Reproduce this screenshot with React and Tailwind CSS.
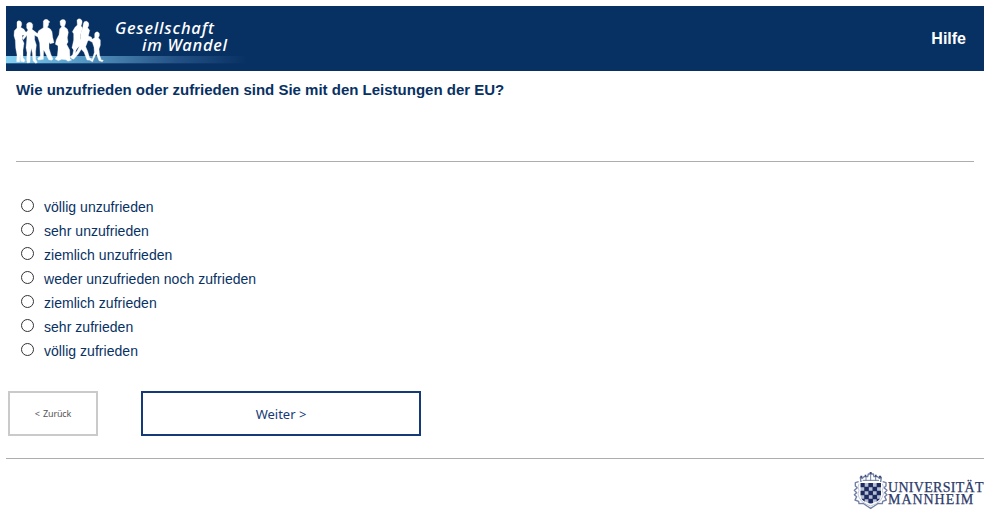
const options = [
  'völlig unzufrieden',
  'sehr unzufrieden',
  'ziemlich unzufrieden',
  'weder unzufrieden noch zufrieden',
  'ziemlich zufrieden',
  'sehr zufrieden',
  'völlig zufrieden',
];

function PeopleBanner() {
  return (
    <svg className="absolute left-0 top-0" width="250" height="65" viewBox="18 18 750 195" aria-hidden="true">
      <defs>
        <linearGradient id="strip" x1="18" x2="740" y1="0" y2="0" gradientUnits="userSpaceOnUse">
          <stop offset="0" stopColor="#84d1f3" />
          <stop offset="0.25" stopColor="#5ba4ce" />
          <stop offset="0.43" stopColor="#4883b0" />
          <stop offset="0.7" stopColor="#245286" />
          <stop offset="1" stopColor="#083163" />
        </linearGradient>
      </defs>
      <rect x="18" y="168" width="722" height="21" fill="url(#strip)" />
      <rect x="18" y="189" width="722" height="3" fill="url(#strip)" opacity="0.3" />
      <g fill="#fff" stroke="#fff" strokeWidth="1" strokeLinejoin="round">
        <path d="M51 66Q54 60 61 63Q67 67 65 75L62 82L72 88L77 96L84 98L76 106L67 105L66 116L72 130L69 150L69 173L75 181L72 186L62 184L60 164L59 185L50 185L51 165L47 143L46 121L42 107L43 92L51 84Z" />
        <path d="M80 72Q84 65 94 68Q100 72 98 81L96 88L104 94L113 101L121 96L122 101L112 110L104 106L104 119L109 135L107 154L107 178L112 187L107 190L99 182L97 159L94 145L91 162L90 187L82 189L80 180L81 158L78 143L80 122L81 106L70 119L66 114L78 98L84 90L80 84Z" />
        <path d="M130 63Q134 56 143 59L146 63L150 66L146 68Q147 77 142 82L151 87L156 95L158 112L162 128L150 131L147 127L147 145L153 164L159 177L155 181L146 179L135 157L131 150L130 178L115 180L113 175L121 169L120 152L119 129L116 119L111 104L116 92L130 83Z" />
        <path d="M180 64Q184 56 193 59Q199 63 196 72L193 80L202 87L205 97L202 113L204 126L200 133L209 150L210 176L215 180L204 184L198 179L185 178L175 182L165 177L172 168L174 149L174 137L166 133L169 119L177 104L179 87L185 80L181 75Z" />
        <path d="M231 61Q234 54 241 57Q248 60 246 69L243 78L248 84L242 103L241 124L236 137L228 151L224 172L218 176L210 171L218 164L221 149L216 143L221 120L221 101L217 95L225 82L232 75Z" />
        <path d="M250 71Q252 62 260 64Q268 67 266 77L263 83L269 91L265 108L274 111L278 122L270 117L263 124L257 140L263 154L269 174L276 176L272 181L261 180L252 157L244 148L235 162L221 178L213 174L231 153L238 139L229 146L220 149L217 141L231 133L242 116L243 98L248 84Z" />
        <path d="M284 101Q287 94 294 96Q300 100 298 107L295 113L301 120L301 136L297 147L299 166L304 180L310 181L307 185L297 182L289 161L281 177L278 185L271 182L277 177L283 157L282 142L277 127L266 121L264 117L276 118L284 113Z" />
      </g>
    </svg>
  );
}

function Crest() {
  const squares = [];
  for (let r = 0; r < 5; r++) {
    for (let c = 0; c < 5; c++) {
      if ((r + c) % 2 === 0) squares.push([58 + c * 12.4, 84 + r * 12]);
    }
  }
  return (
    <svg className="shrink-0" width="35" height="40" viewBox="36 45 105 120" aria-hidden="true">
      <defs>
        <clipPath id="shield">
          <path d="M58 84H120V122Q118 136 101 142L89 148L77 142Q60 136 58 122Z" />
        </clipPath>
      </defs>
      <g clipPath="url(#shield)">
        <rect x="57" y="82" width="64" height="68" fill="#b9c0d3" />
        {squares.map(([x, y]) => (
          <rect key={x + '-' + y} x={x - 0.7} y={y - 0.7} width="13.8" height="13.4" fill="#1d2b60" />
        ))}
      </g>
      <g fill="none" stroke="#7380a5" strokeWidth="4.2" strokeLinejoin="round">
        <path d="M60 81L58 67L64 70L69 65H80L82 57H97L99 65H110L115 70L121 67L119 81" />
        <path d="M65 76H114M89 52V78M75 66V78M104 66V78" strokeWidth="3" />
        <path d="M53 80L43 83V93L49 98L40 106L47 113L40 119L47 125L42 135L53 139L54 146L67 145L78 153L89 160L100 153L111 145L124 146L125 139L136 135L131 125L138 119L131 113L138 106L129 98L135 93V83L125 80" />
        <path d="M54 86L51 96L54 106L51 117L54 127L61 138L75 147L89 153L103 147L117 138L124 127L127 117L124 106L127 96L124 86" stroke="#c1c7d8" strokeWidth="3" />
      </g>
      <g fill="#3c4a7a">
        <path d="M58 62H64V68H58ZM71 59H76V65H71ZM86 51H92V57H86ZM102 59H107V65H102ZM114 62H120V68H114Z" />
      </g>
    </svg>
  );
}

export default function App() {
  return (
    <main className="h-[513px] w-[986px] overflow-hidden bg-white pl-1.5 pr-0.5 pt-1.5 font-['Liberation_Sans',Arial,sans-serif] text-[#083163]">
      <header className="relative flex h-[65px] items-start justify-between bg-[#083163] text-white">
        <PeopleBanner />
        <div className="relative pl-[109px] pt-[13px] font-['Noto_Sans',sans-serif] text-[16.5px] font-medium italic leading-[17px]">
          <div className="tracking-[0.8px]">Gesellschaft</div>
          <div className="pl-[27px] tracking-[0.75px]">im Wandel</div>
        </div>
        <a className="pr-[18px] pt-[21px] text-[16px] font-bold leading-6">Hilfe</a>
      </header>
      <section className="px-2.5">
        <h1 className="h-[91px] border-b border-[#adadad] pt-[9px] text-[15px] font-bold leading-5">
          Wie unzufrieden oder zufrieden sind Sie mit den Leistungen der EU?
        </h1>
        <div className="mt-[33px] flex flex-col pl-[5px]">
          {options.map((option) => (
            <label key={option} className="flex h-6 items-start gap-[10px] text-[14px] leading-6 tracking-[0.04px]">
              <input type="radio" name="satisfaction" className="mt-[4px] h-[13px] w-[13px] shrink-0 appearance-none rounded-full border border-[#333] bg-white" />
              <span>{option}</span>
            </label>
          ))}
        </div>
      </section>
      <div className="ml-0.5 mt-[28px] flex gap-[43px] font-['Noto_Sans',sans-serif]">
        <button className="h-[45px] w-[90px] border-2 border-[#cacaca] text-[9px] tracking-[-0.15px] [word-spacing:1px] text-[#555]">&lt; Zurück</button>
        <button className="h-[45px] w-[280px] border-2 border-[#163a78] pt-[2px] text-[13px] text-[#163a78]">Weiter &gt;</button>
      </div>
      <footer className="mt-[22px] flex justify-end border-t border-[#adadad] pt-[11px]">
        <Crest />
        <div className="w-[96px] whitespace-nowrap pt-[12px] font-['Liberation_Serif',serif] text-[14px] leading-[12px] text-[#2c3a69] [-webkit-text-stroke:0.25px_#2c3a69]">
          <div className="tracking-[0.3px]">UNIVERSITÄT</div>
          <div className="tracking-[0.95px]">MANNHEIM</div>
        </div>
      </footer>
    </main>
  );
}
